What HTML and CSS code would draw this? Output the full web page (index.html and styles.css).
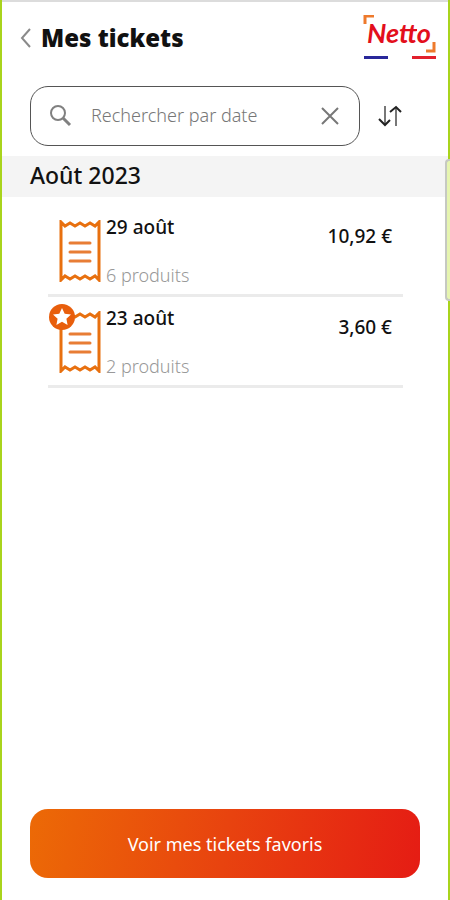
FILE: index.html
```html
<!DOCTYPE html>
<html lang="fr">
<head>
<meta charset="utf-8">
<meta name="viewport" content="width=device-width, initial-scale=1">
<title>Mes tickets</title>
<link rel="stylesheet" href="styles.css">
</head>
<body>
<div class="screen">
  <header class="header">
    <button class="icon-button back" type="button" aria-label="Retour">
      <svg width="12" height="20" viewBox="0 0 12 20"><path d="M10 1 L2 10 L10 19" fill="none" stroke="#8a8a8a" stroke-width="2"/></svg>
    </button>
    <h1 class="title">Mes tickets</h1>
    <svg class="logo" width="74" height="46" viewBox="0 0 74 46" role="img" aria-label="Netto">
      <path d="M2 9 V1 H11" fill="none" stroke="#ee7a2c" stroke-width="3"/>
      <path d="M63 36 H71 V27" fill="none" stroke="#ee7a2c" stroke-width="3"/>
      <text class="logo-text" x="4" y="28">Netto</text>
      <path d="M42 15 H54" stroke="#e30f1c" stroke-width="2"/>
      <rect x="1" y="41" width="24" height="3" fill="#29289a"/>
      <rect x="49" y="41" width="24" height="3" fill="#e2202c"/>
    </svg>
  </header>

  <form class="search-row">
    <div class="search">
      <svg width="24" height="24" viewBox="0 0 24 24" aria-hidden="true"><circle cx="9" cy="9" r="7" fill="none" stroke="#808080" stroke-width="2"/><path d="M14 14 L21 21" stroke="#808080" stroke-width="3"/></svg>
      <input class="search-input" type="text" placeholder="Rechercher par date" aria-label="Rechercher par date">
      <button class="icon-button" type="reset" aria-label="Effacer">
        <svg width="18" height="18" viewBox="0 0 18 18"><path d="M1 1 L17 17 M17 1 L1 17" stroke="#777" stroke-width="2"/></svg>
      </button>
    </div>
    <button class="icon-button" type="button" aria-label="Trier">
      <svg width="24" height="22" viewBox="0 0 24 22" fill="none"><path d="M7 1 V19 M18 21 V3" stroke="#777" stroke-width="2"/><path d="M1 14 L7 20 L12 15 M12 7 L18 2 L23 7" stroke="#222" stroke-width="2"/></svg>
    </button>
  </form>

  <main class="content">
    <h2 class="month">Août 2023</h2>
    <ul class="tickets">
      <li class="ticket">
        <div class="ticket-icon">
          <svg width="42" height="62" viewBox="0 0 42 62" aria-hidden="true"><path d="M2 2 L6 6 L11 3 L16 6 L21 3 L26 6 L31 3 L36 6 L40 2 V60 L36 56 L31 59 L26 56 L21 59 L16 56 L11 59 L6 56 L2 60 Z" fill="#fff" stroke="#e8700f" stroke-width="3"/><path d="M11 23 H31 M11 32 H31 M11 41 H31" stroke="#e87d35" stroke-width="3" stroke-linecap="round"/></svg>
        </div>
        <div class="ticket-info">
          <span class="date">29 août</span>
          <span class="count">6 produits</span>
        </div>
        <span class="price">10,92 €</span>
      </li>
      <li class="ticket">
        <div class="ticket-icon">
          <svg width="42" height="62" viewBox="0 0 42 62" aria-hidden="true"><path d="M2 2 L6 6 L11 3 L16 6 L21 3 L26 6 L31 3 L36 6 L40 2 V60 L36 56 L31 59 L26 56 L21 59 L16 56 L11 59 L6 56 L2 60 Z" fill="#fff" stroke="#e8700f" stroke-width="3"/><path d="M11 23 H31 M11 32 H31 M11 41 H31" stroke="#e87d35" stroke-width="3" stroke-linecap="round"/></svg>
          <svg class="favorite" width="26" height="26" viewBox="0 0 26 26" role="img" aria-label="Favori"><circle cx="13" cy="13" r="13" fill="#e85e0c"/><path d="M13 4 L15.700 9.700 L22 10.400 L17.400 14.700 L18.600 21 L13 17.800 L7.400 21 L8.600 14.700 L4 10.400 L10.300 9.700 Z" fill="#fff"/></svg>
        </div>
        <div class="ticket-info">
          <span class="date">23 août</span>
          <span class="count">2 produits</span>
        </div>
        <span class="price">3,60 €</span>
      </li>
    </ul>
  </main>

  <footer class="footer">
    <button class="favorites-button" type="button">Voir mes tickets favoris</button>
  </footer>
  <div class="edge-handle"></div>
</div>
</body>
</html>
```
FILE: styles.css
```css
* {
  box-sizing: border-box;
}

body {
  margin: 0;
  background: #fff;
  color: #111;
  font-family: "Noto Sans", "Open Sans", sans-serif;
}

.screen {
  position: relative;
  display: flex;
  flex-direction: column;
  min-height: 100vh;
  border: solid #a9d41c;
  border-width: 0 2px;
}

.header {
  display: flex;
  align-items: center;
  height: 76px;
  padding: 0 11px 2px 18px;
  border-top: 2px solid #dcdcdc;
}

.icon-button {
  display: flex;
  padding: 0;
  border: 0;
  background: none;
}

.title {
  flex: 1;
  margin: 0 0 0 9px;
  font-size: 24px;
  line-height: 32px;
  font-weight: 900;
}

.logo-text {
  font-family: Lato, sans-serif;
  font-size: 27px;
  font-style: italic;
  font-weight: 700;
  fill: #e30f1c;
}

.search-row {
  display: flex;
  align-items: center;
  gap: 18px;
  margin: 10px 46px 10px 28px;
}

.search {
  display: flex;
  flex: 1;
  align-items: center;
  height: 60px;
  min-width: 0;
  padding: 0 20px 0 18px;
  border: 1px solid #555;
  border-radius: 18px;
}

.search-input {
  flex: 1;
  min-width: 0;
  margin: 0 0 0 18px;
  padding: 0 0 2px;
  border: 0;
  outline: 0;
  background: none;
  font: 300 18px/24px "Noto Sans", "Open Sans", sans-serif;
}

.search-input::placeholder {
  color: #777;
  opacity: 1;
}

.content {
  flex: 1;
}

.month {
  margin: 0;
  padding: 0 28px 2px;
  background: #f4f4f4;
  font-size: 23px;
  line-height: 39px;
  font-weight: 500;
}

.tickets {
  margin: 9px 45px 0 46px;
  padding: 0;
  list-style: none;
}

.ticket {
  display: flex;
  align-items: flex-start;
  height: 91px;
  padding: 7px 11px 0 11px;
  border-bottom: 3px solid #ebebeb;
}

.ticket-icon {
  position: relative;
  display: flex;
  padding-top: 7px;
}

.favorite {
  position: absolute;
  top: 0;
  left: -10px;
}

.ticket-info {
  display: flex;
  flex: 1;
  flex-direction: column;
  gap: 24px;
  padding-top: 2px;
  margin-left: 5px;
  line-height: 24px;
}

.date {
  font-size: 19px;
  font-weight: 500;
}

.count {
  color: #999;
  font-size: 18px;
  font-weight: 300;
}

.price {
  padding-top: 11px;
  font-size: 19px;
  line-height: 24px;
  font-weight: 500;
}

.footer {
  padding: 0 28px 22px;
}

.favorites-button {
  width: 100%;
  height: 69px;
  border: 0;
  border-radius: 18px;
  background: linear-gradient(100deg, #ec6a06, #e8430f 50%, #e51c14);
  color: #fff;
  font: 400 18px/24px "Noto Sans", "Open Sans", sans-serif;
}

.edge-handle {
  position: absolute;
  top: 159px;
  right: -2px;
  width: 5px;
  height: 142px;
  border: 2px solid #c6c9c2;
  border-right: 0;
  border-radius: 4px 0 0 4px;
  background: #e6f5b0;
}
```
